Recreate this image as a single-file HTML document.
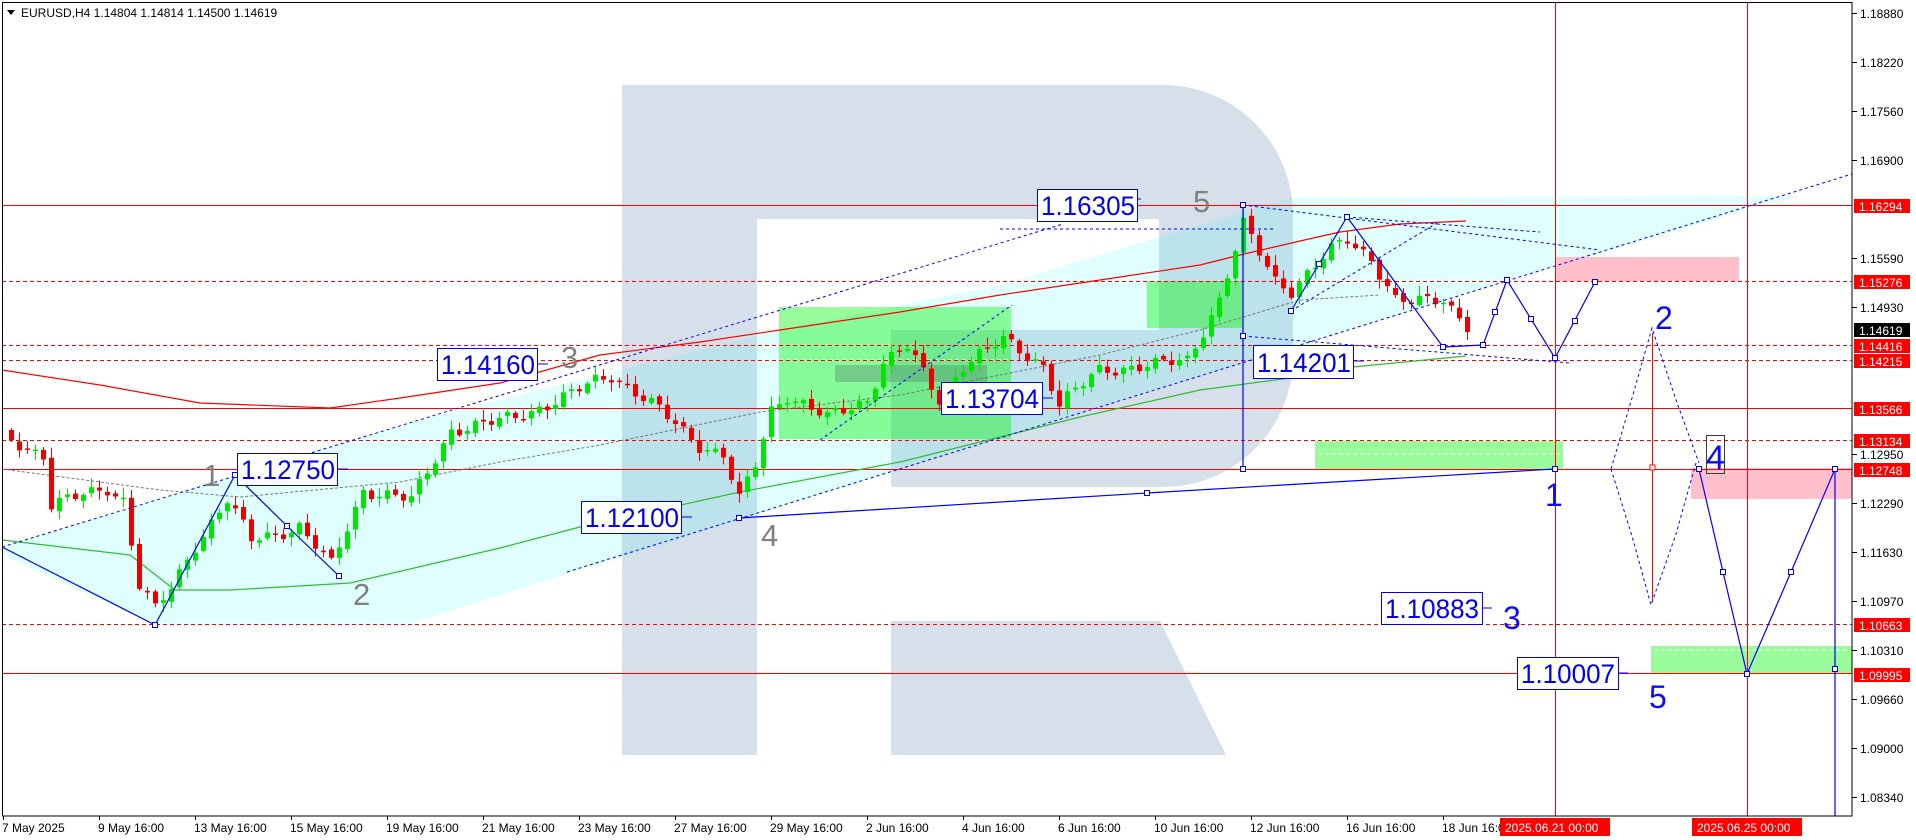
<!DOCTYPE html>
<html><head><meta charset="utf-8"><style>
html,body{margin:0;padding:0;background:#fff;width:1916px;height:840px;overflow:hidden}
svg{display:block}
text{font-family:"Liberation Sans",sans-serif}
.ax{font-size:12px;fill:#000}
.axw{font-size:12px;fill:#fff}
.lb{font-size:27px;fill:#0000ee}
.gn{font-size:31px;fill:#808080}
.bn{font-size:32px;fill:#0a0aff}
</style></head><body>
<svg id="s" width="1916" height="840" viewBox="0 0 1916 840" xmlns="http://www.w3.org/2000/svg">
<rect width="1916" height="840" fill="#fff"/>
<g fill="#d6e0ea">
<rect x="622" y="85" width="135" height="670"/>
<path d="M757 85 H1163 A130 130 0 0 1 1293 215 V357 A130 130 0 0 1 1163 487 H891 V330 H1159 V219 H757 Z"/>
<path d="M891 621 H1160 L1226 755 H891 Z"/>
</g>
<polygon fill="rgba(0,255,255,0.12)" points="2,547 420,420 780,330 1000,285 1290,198 1800,196 1760,206 1500,283 1000,438 405,625 155,625 2,555"/>
<g fill="rgba(0,245,0,0.40)">
<rect x="779" y="307" width="232" height="132"/>
<rect x="1147" y="281" width="96" height="47"/>
<rect x="1315" y="441" width="248" height="28"/>
<rect x="1651" y="646" width="201" height="28"/>
</g>
<rect x="835" y="365" width="152" height="17" fill="rgba(80,120,110,0.35)"/>
<g stroke="#fff" stroke-dasharray="4,3" stroke-width="1">
<line x1="1318" y1="454" x2="1560" y2="454"/>
<line x1="1654" y1="650" x2="1850" y2="650"/>
<line x1="780" y1="360" x2="1010" y2="360"/>
</g>
<rect x="1555" y="257" width="184" height="24" fill="#ffc0cb"/>
<rect x="1691" y="468" width="161" height="31" fill="#ffc0cb"/>
<g stroke="#ff0000" stroke-width="1">
<line x1="2" y1="205.5" x2="1852" y2="205.5"/>
<line x1="2" y1="408.5" x2="1852" y2="408.5"/>
<line x1="2" y1="469.5" x2="1852" y2="469.5"/>
<line x1="2" y1="673.5" x2="1852" y2="673.5"/>
<line x1="1555.5" y1="2" x2="1555.5" y2="816"/>
<line x1="1747.5" y1="2" x2="1747.5" y2="816"/>
</g>
<g stroke="#ff0000" stroke-width="1" stroke-dasharray="4,3">
<line x1="2" y1="281.5" x2="1852" y2="281.5"/>
<line x1="2" y1="345.5" x2="1852" y2="345.5"/>
<line x1="2" y1="360.5" x2="1852" y2="360.5"/>
<line x1="2" y1="440.5" x2="1852" y2="440.5"/>
<line x1="2" y1="624.5" x2="1852" y2="624.5"/>
</g>
<polyline fill="none" stroke="#ff0000" stroke-width="1.2" points="2,370 100,385 200,403 330,408 400,398 500,383 600,355 700,342 780,330 900,312 1000,295 1100,280 1200,265 1240,255 1300,241 1340,232 1400,224 1466,221"/>
<polyline fill="none" stroke="#33bb33" stroke-width="1.2" points="2,540 130,555 175,590 230,590 350,583 500,548 580,527 740,492 900,462 1000,437 1080,417 1200,390 1290,378 1353,367 1466,356"/>
<polyline fill="none" stroke="#777" stroke-width="1" stroke-dasharray="3,2" points="2,469 160,490 240,497 400,482 500,462 600,445 760,412 900,395 1000,375 1100,355 1200,330 1300,300 1380,295"/>
<g id="candles"></g>
<g stroke="#0000ff" stroke-width="1" stroke-dasharray="3,3" fill="none">
<line x1="2" y1="547" x2="1063" y2="224"/>
<line x1="567" y1="572" x2="1852" y2="174"/>
<line x1="1243" y1="205" x2="1600" y2="250"/>
<line x1="1347" y1="217" x2="1540" y2="232"/>
<line x1="1243" y1="336" x2="1570" y2="363"/>
<line x1="1291" y1="311" x2="1437" y2="223"/>
<line x1="1000" y1="229" x2="1276" y2="229"/>
<line x1="820" y1="440" x2="1012" y2="305"/>
<polyline points="1611,469 1632,398 1652,328 1676,400 1699,463"/>
<polyline points="1611,469 1632,536 1651,605 1676,534 1696,463"/>
</g>
<line x1="1652.5" y1="333" x2="1652.5" y2="602" stroke="#ff0000"/>
<rect x="1650" y="465" width="5" height="5" fill="#fff" stroke="#ff0000"/>
<g stroke="#0000ff" stroke-width="1.2" fill="none">
<polyline points="2,547 155,625 235,475 287,526 339,576"/>
<polyline points="739,518 1147,493 1555,469"/>
<line x1="1243" y1="205" x2="1243" y2="469"/>
<polyline points="1291,311 1319,264 1347,217 1443,347"/>
<polyline points="1443,347 1483,345"/>
<polyline points="1483,345 1507,280 1555,358 1595,282"/>
<polyline points="1699,469 1723,572 1747,674 1791,572 1835,469"/>
<line x1="1835" y1="469" x2="1835" y2="816"/>
</g>
<g stroke="#0000ff" fill="#fff" stroke-width="1">
<rect x="152.5" y="622.5" width="5" height="5"/><rect x="232.5" y="472.5" width="5" height="5"/><rect x="284.5" y="523.5" width="5" height="5"/><rect x="336.5" y="573.5" width="5" height="5"/>
<rect x="736.5" y="515.5" width="5" height="5"/><rect x="1144.5" y="490.5" width="5" height="5"/><rect x="1552.5" y="466.5" width="5" height="5"/>
<rect x="1240.5" y="202.5" width="5" height="5"/><rect x="1240.5" y="333.5" width="5" height="5"/><rect x="1240.5" y="466.5" width="5" height="5"/>
<rect x="1288.5" y="308.5" width="5" height="5"/><rect x="1316.5" y="261.5" width="5" height="5"/><rect x="1344.5" y="214.5" width="5" height="5"/><rect x="1440.5" y="344.5" width="5" height="5"/>
<rect x="1480.5" y="342.5" width="5" height="5"/><rect x="1492.5" y="309.5" width="5" height="5"/><rect x="1504.5" y="277.5" width="5" height="5"/><rect x="1528.5" y="316.5" width="5" height="5"/><rect x="1552.5" y="355.5" width="5" height="5"/><rect x="1572.5" y="318.5" width="5" height="5"/><rect x="1592.5" y="279.5" width="5" height="5"/>
<rect x="1696.5" y="466.5" width="5" height="5"/><rect x="1720.5" y="569.5" width="5" height="5"/><rect x="1744.5" y="671.5" width="5" height="5"/><rect x="1788.5" y="569.5" width="5" height="5"/><rect x="1832.5" y="466.5" width="5" height="5"/><rect x="1832.5" y="666.5" width="5" height="5"/>
</g>
<g stroke="#0000ff" stroke-width="1">
<line x1="337" y1="469" x2="348" y2="469"/><line x1="537" y1="364" x2="548" y2="364"/><line x1="681" y1="517" x2="692" y2="517"/><line x1="1042" y1="398" x2="1053" y2="398"/><line x1="1137" y1="199" x2="1141" y2="199"/><line x1="1353" y1="361" x2="1364" y2="361"/><line x1="1482" y1="608" x2="1492" y2="608"/><line x1="1618" y1="673" x2="1628" y2="673"/>
</g>
<g fill="#fff" stroke="#0000ff" stroke-width="1">
<rect x="237.5" y="453.5" width="100" height="32"/>
<rect x="437.5" y="348.5" width="100" height="32"/>
<rect x="581.5" y="501.5" width="100" height="32"/>
<rect x="941.5" y="382.5" width="101" height="32"/>
<rect x="1037.5" y="189.5" width="100" height="32"/>
<rect x="1253.5" y="345.5" width="100" height="33"/>
<rect x="1381.5" y="592.5" width="101" height="32"/>
<rect x="1517.5" y="657.5" width="101" height="32"/>
</g>
<g class="lb" text-anchor="middle">
<text x="288" y="479" textLength="94" lengthAdjust="spacingAndGlyphs">1.12750</text>
<text x="488" y="374" textLength="94" lengthAdjust="spacingAndGlyphs">1.14160</text>
<text x="632" y="527" textLength="94" lengthAdjust="spacingAndGlyphs">1.12100</text>
<text x="992" y="408" textLength="94" lengthAdjust="spacingAndGlyphs">1.13704</text>
<text x="1088" y="215" textLength="94" lengthAdjust="spacingAndGlyphs">1.16305</text>
<text x="1304" y="372" textLength="94" lengthAdjust="spacingAndGlyphs">1.14201</text>
<text x="1432" y="618" textLength="94" lengthAdjust="spacingAndGlyphs">1.10883</text>
<text x="1568" y="683" textLength="94" lengthAdjust="spacingAndGlyphs">1.10007</text>
</g>
<g class="gn">
<text x="203" y="486">1</text><text x="353" y="605">2</text><text x="561" y="368">3</text><text x="761" y="546">4</text><text x="1193" y="212">5</text>
</g>
<g class="bn">
<text x="1545" y="506">1</text><text x="1655" y="329">2</text><text x="1503" y="629">3</text><text x="1649" y="708">5</text>
</g>
<rect x="1706.5" y="435.5" width="18" height="38" fill="none" stroke="#224433"/>
<text x="1706" y="469" class="bn" style="font-size:34px">4</text>
<rect x="2.5" y="2.5" width="1849.5" height="813.5" fill="none" stroke="#000" stroke-width="1"/>
<polygon points="7,10 15,10 11,15" fill="#000"/>
<text x="21" y="17" class="ax">EURUSD,H4  1.14804 1.14814 1.14500 1.14619</text>
<g id="yax"></g>
<g id="xax"></g>
<rect x="1500" y="818" width="110" height="18" fill="#ff0000"/>
<text x="1505" y="832" class="axw">2025.06.21 00:00</text>
<rect x="1692" y="818" width="110" height="18" fill="#ff0000"/>
<text x="1697" y="832" class="axw">2025.06.25 00:00</text>
</svg>
<script>
(function(){
var NS="http://www.w3.org/2000/svg";
function el(t,a,p){var e=document.createElementNS(NS,t);for(var k in a)e.setAttribute(k,a[k]);p.appendChild(e);return e;}
var ya=document.getElementById('yax');
var ticks=[["1.18880",13],["1.18220",62],["1.17560",111],["1.16900",160],["1.15590",258],["1.14930",307],["1.12950",454],["1.12290",503],["1.11630",552],["1.10970",601],["1.10310",650],["1.09660",699],["1.09000",748],["1.08340",797]];
ticks.forEach(function(t){el('line',{x1:1852,y1:t[1]+.5,x2:1857,y2:t[1]+.5,stroke:'#000'},ya);var q=el('text',{x:1860,y:t[1]+5,'class':'ax'},ya);q.textContent=t[0];});
var reds=[["1.16294",206,'#ff0000'],["1.15276",282,'#ff0000'],["1.14619",330,'#000'],["1.14416",346,'#ff0000'],["1.14215",361,'#ff0000'],["1.13566",409,'#ff0000'],["1.13134",441,'#ff0000'],["1.12748",470,'#ff0000'],["1.10663",625,'#ff0000'],["1.09995",675,'#ff0000']];
reds.forEach(function(t){el('rect',{x:1854,y:t[1]-7,width:56,height:14,fill:t[2]},ya);var q=el('text',{x:1859,y:t[1]+5,'class':'axw'},ya);q.textContent=t[0];});
var xa=document.getElementById('xax');
var xl=[["7 May 2025",3],["9 May 16:00",99],["13 May 16:00",195],["15 May 16:00",291],["19 May 16:00",387],["21 May 16:00",483],["23 May 16:00",579],["27 May 16:00",675],["29 May 16:00",771],["2 Jun 16:00",867],["4 Jun 16:00",963],["6 Jun 16:00",1059],["10 Jun 16:00",1155],["12 Jun 16:00",1251],["16 Jun 16:00",1347],["18 Jun 16:00",1443]];
xl.forEach(function(t){el('line',{x1:t[1]+.5,y1:816,x2:t[1]+.5,y2:820,stroke:'#000'},xa);var q=el('text',{x:t[1]-1,y:832,'class':'ax'},xa);q.textContent=t[0];});
var kp=[[3,430],[11,440],[43,455],[51,505],[107,488],[123,500],[139,585],[155,610],[171,588],[195,545],[227,500],[251,540],[299,527],[331,565],[363,490],[411,500],[451,430],[483,425],[520,415],[560,400],[596,380],[611,375],[659,410],[699,445],[723,455],[739,500],[755,465],[771,410],[787,395],[827,418],[867,400],[883,362],[907,347],[939,400],[963,365],[1003,340],[1043,365],[1059,405],[1099,370],[1155,365],[1187,360],[1219,300],[1243,225],[1275,280],[1291,290],[1331,250],[1347,240],[1371,258],[1395,300],[1411,303],[1443,299],[1467,325]];
function interp(px){for(var j=1;j<kp.length;j++){if(px<=kp[j][0]){var a=kp[j-1],b=kp[j];return a[1]+(b[1]-a[1])*(px-a[0])/(b[0]-a[0]);}}return kp[kp.length-1][1];}
var cg=document.getElementById('candles');
var prev=interp(3);
for(var cx=11;cx<=1467;cx+=8){
 var n=(cx-11)/8;
 var cl=interp(cx)+Math.sin(n*1.7)*5+Math.sin(n*0.6)*3;
 var op=prev+Math.sin(n*2.3)*2;
 var bt=Math.min(op,cl),bb=Math.max(op,cl);
 if(bb-bt<1.5){bb=bt+1.5;}
 var hi=bt-(2+(n*7)%9),lo=bb+(2+(n*5)%8);
 var col=(cl<op)?'#00e600':'#ee0000';
 el('line',{x1:cx+.5,y1:hi,x2:cx+.5,y2:lo,stroke:col,'stroke-width':1},cg);
 el('rect',{x:cx-2,y:bt,width:5,height:bb-bt,fill:col},cg);
 prev=cl;
}
})();
</script>
</body></html>
